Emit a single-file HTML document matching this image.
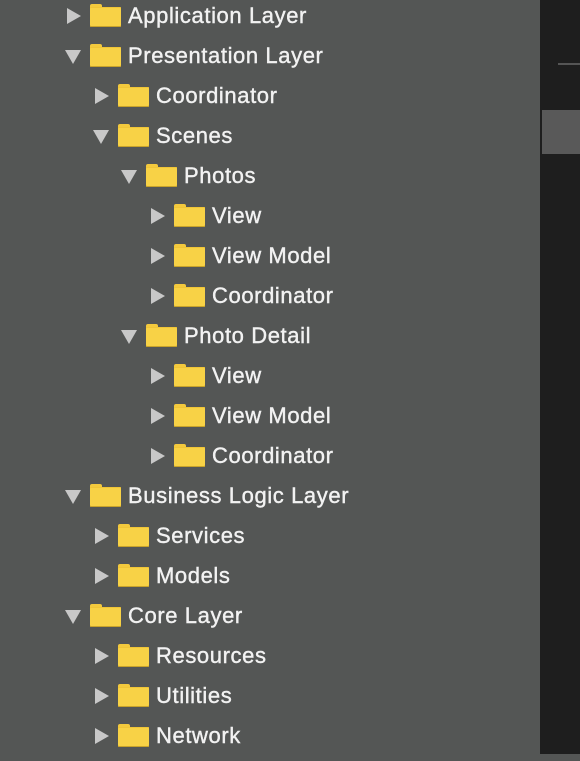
<!DOCTYPE html>
<html><head><style>
body{margin:0;width:580px;height:754px;background:#545655;position:relative;overflow:hidden;font-family:"Liberation Sans",sans-serif}
.r{position:absolute;height:40px;left:0;width:540px}
.t{position:absolute;top:7px;width:0;height:0}
.t.c{border-top:8px solid transparent;border-bottom:8px solid transparent;border-left:14px solid #c8c8c8}
.t.o{top:9px;border-left:8px solid transparent;border-right:8px solid transparent;border-top:14px solid #c8c8c8}
.f{position:absolute;top:3px;width:31px;height:23px}
.f:before{content:"";position:absolute;left:0;top:0;width:12px;height:5px;background:#f3c93d;border-radius:2px 2px 0 0}
.f:after{content:"";position:absolute;left:0;top:3px;width:31px;height:20px;background:#f8d246;border-radius:1px;box-shadow:inset 0 -1px 0 #c9a32a,inset 0 1px 0 #f0c537}
.l{position:absolute;top:3px;color:#f2f2f2;font-size:22px;line-height:24px;letter-spacing:0.6px;-webkit-text-stroke:0.4px #f2f2f2}
#side{position:absolute;left:540px;top:0;width:40px;height:754px;background:#1e1e1e}
</style></head><body>
<div id="side"><div style="position:absolute;left:18px;top:63px;width:22px;height:2px;background:#555"></div><div style="position:absolute;left:2px;top:110px;width:38px;height:44px;background:#595959"></div></div>
<script>
const rows=[[0,'c','Application Layer'],[0,'o','Presentation Layer'],[1,'c','Coordinator'],[1,'o','Scenes'],[2,'o','Photos'],[3,'c','View'],[3,'c','View Model'],[3,'c','Coordinator'],[2,'o','Photo Detail'],[3,'c','View'],[3,'c','View Model'],[3,'c','Coordinator'],[0,'o','Business Logic Layer'],[1,'c','Services'],[1,'c','Models'],[0,'o','Core Layer'],[1,'c','Resources'],[1,'c','Utilities'],[1,'c','Network']];
let h='';rows.forEach((r,i)=>{const x=r[0]*28;const y=i*40+1;
h+=`<div class="r" style="top:${y}px"><div class="t ${r[1]}" style="left:${(r[1]=='c'?67:65)+x}px"></div><div class="f" style="left:${90+x}px"></div><div class="l" style="left:${128+x}px">${r[2]}</div></div>`});
document.write(h);
</script>
</body></html>
